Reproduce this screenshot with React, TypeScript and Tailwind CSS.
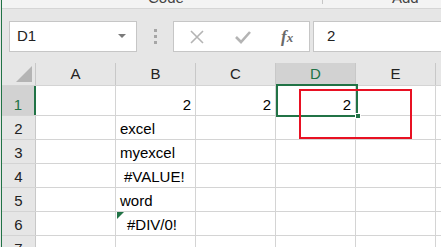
const COLS = ["A", "B", "C", "D", "E"];

type Cell = { text: string; align?: "left" | "right"; indent?: string };

const ROWS: { h: string; cells: Record<string, Cell> }[] = [
  { h: "h-[30px]", cells: { B: { text: "2", align: "right" }, C: { text: "2", align: "right" }, D: { text: "2", align: "right" } } },
  { h: "h-[24px]", cells: { B: { text: "excel" } } },
  { h: "h-[24px]", cells: { B: { text: "myexcel" } } },
  { h: "h-[24px]", cells: { B: { text: "#VALUE!", indent: "pl-[8px]" } } },
  { h: "h-[24px]", cells: { B: { text: "word" } } },
  { h: "h-[24px]", cells: { B: { text: "#DIV/0!", indent: "pl-[11px]" } } },
  { h: "h-[24px]", cells: {} },
];

function Toolbar() {
  return (
    <div className="h-[54px] bg-[#e6e6e6] flex items-start pt-[12px]">
      <div className="ml-[7px] w-[128px] h-[31px] bg-white border border-[#c6c6c6] flex items-center justify-between pl-[7px] pr-[10px]">
        <span className="text-[15px] text-[#222]">D1</span>
        <svg width="8" height="5" viewBox="0 0 8 5">
          <path d="M0 0 L8 0 L4 4 Z" fill="#7a7a7a" />
        </svg>
      </div>
      <div className="ml-[17px] mt-[8px] flex flex-col gap-[3px]">
        <div className="w-[3px] h-[3px] bg-[#a6a6a6]" />
        <div className="w-[3px] h-[3px] bg-[#a6a6a6]" />
        <div className="w-[3px] h-[3px] bg-[#a6a6a6]" />
      </div>
      <div className="ml-[16px] w-[137px] h-[31px] bg-white border border-[#c6c6c6] flex items-center">
        <svg className="ml-[16px]" width="14" height="14" viewBox="0 0 14 14">
          <path d="M1 1 L13 13 M13 1 L1 13" stroke="#b4b4b4" strokeWidth="1.6" />
        </svg>
        <svg className="ml-[31px]" width="16" height="14" viewBox="0 0 16 14">
          <path d="M1 7 L6 12 L15 2" stroke="#b4b4b4" strokeWidth="2.6" fill="none" />
        </svg>
        <span className="ml-[30px] text-[17px] italic font-bold text-[#6a6a6a] font-['Liberation_Serif',serif]">
          f<span className="text-[13px]">x</span>
        </span>
      </div>
      <div className="ml-[3px] flex-1 h-[31px] bg-white border border-[#c6c6c6] border-r-0 flex items-center pl-[13px]">
        <span className="text-[15px] text-[#222]">2</span>
      </div>
    </div>
  );
}

export default function App() {
  return (
    <div className="w-[441px] h-[247px] overflow-hidden bg-[#e6e6e6] pl-px font-['Liberation_Sans',Arial,sans-serif]">
      <div className="relative h-full border-l border-[#217346] bg-white">
        <div className="h-[9px] bg-[#f3f3f3] border-b border-[#d5d5d5] relative overflow-hidden">
          <span className="absolute left-[146px] top-[-13px] text-[15px] text-[#444]">Code</span>
          <div className="absolute left-[320px] top-0 w-px h-[4px] bg-[#c6c6c6]" />
          <span className="absolute left-[390px] top-[-13px] text-[15px] text-[#444]">Add-ins</span>
        </div>
        <Toolbar />

        <div className="flex h-[23px] bg-[#e6e6e6] border-b border-[#d4d4d4]">
          <div className="w-[34px] border-r border-[#c8c8c8] flex items-end justify-end pr-[3px] pb-[3px]">
            <svg width="16" height="16" viewBox="0 0 16 16">
              <path d="M16 0 L16 16 L0 16 Z" fill="#b4b4b4" />
            </svg>
          </div>
          {COLS.map((c) => (
            <div
              key={c}
              className={`w-[80px] shrink-0 border-r border-[#c8c8c8] flex items-center justify-center text-[15px] ${
                c === "D" ? "bg-[#d2d2d2] text-[#217346]" : "text-[#222]"
              }`}
            >
              {c}
            </div>
          ))}
          <div className="flex-1" />
        </div>

        {ROWS.map((row, i) => (
          <div key={i} className={`flex ${row.h} border-b border-[#d4d4d4]`}>
            <div
              className={`w-[34px] shrink-0 flex items-end justify-center leading-[20px] text-[15px] ${
                i === 0
                  ? "bg-[#d2d2d2] text-[#217346] border-r-2 border-[#217346]"
                  : "bg-[#e6e6e6] text-[#222] border-r border-[#c8c8c8]"
              }`}
            >
              {i + 1}
            </div>
            {COLS.map((c) => {
              const cell = row.cells[c];
              return (
                <div
                  key={c}
                  className={`w-[80px] shrink-0 border-r border-[#d4d4d4] flex items-end leading-[20px] text-[15px] text-black ${
                    cell?.align === "right" ? "justify-end pr-[4px]" : `justify-start ${cell?.indent ?? "pl-[4px]"}`
                  }`}
                >
                  {cell?.text}
                </div>
              );
            })}
            <div className="flex-1" />
          </div>
        ))}

        {/* selection on D1 */}
        <div className="absolute left-[274px] top-[84px] w-[82px] h-[33px] border-2 border-[#217346]" />
        <div className="absolute left-[353px] top-[113px] w-[6px] h-[6px] bg-[#217346] border border-white" />
        {/* red annotation */}
        <div className="absolute left-[297px] top-[89px] w-[113px] h-[50px] border-2 border-[#e81123]" />
        {/* error indicator on B6 */}
        <svg className="absolute left-[115px] top-[212px]" width="7" height="7" viewBox="0 0 7 7">
          <path d="M0 0 L7 0 L0 7 Z" fill="#217346" />
        </svg>
      </div>
    </div>
  );
}
